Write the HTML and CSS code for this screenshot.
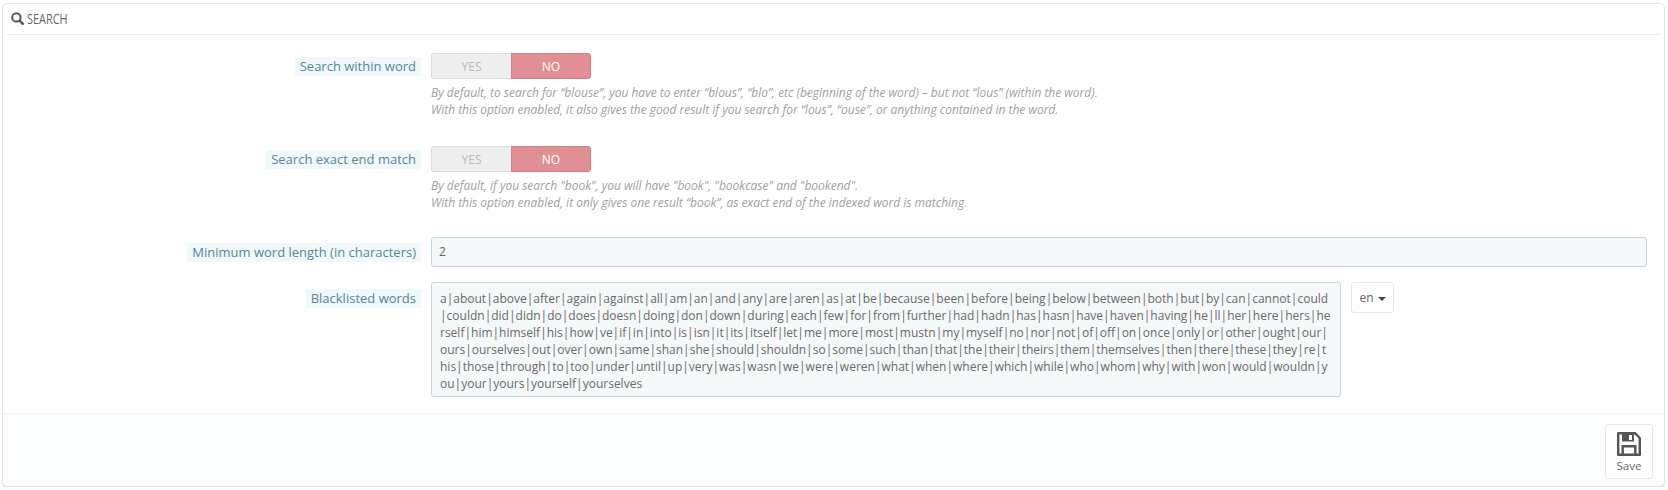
FILE: index.html
```html
<!DOCTYPE html>
<html lang="en">
<head>
<meta charset="utf-8">
<title>Search</title>
<link rel="stylesheet" href="styles.css">
</head>
<body>
<form class="panel">
  <div class="panel-heading">
    <svg class="search-icon" viewBox="0 0 13 13" width="13" height="13" aria-hidden="true"><circle cx="5.4" cy="5.4" r="4.2" fill="none" stroke="#555" stroke-width="2"/><path d="M8.6 8.6l3.2 3.2" stroke="#555" stroke-width="2.4" stroke-linecap="round"/></svg>
    <span class="heading-text">SEARCH</span>
  </div>
  <div class="form-wrapper">
    <div class="form-group first">
      <div class="label-col"><span class="label-text">Search within word</span></div>
      <div class="control-col">
        <div class="switch"><span class="opt">YES</span><span class="opt on">NO</span></div>
        <p class="help">By default, to search for “blouse”, you have to enter “blous”, “blo”, etc (beginning of the word) – but not “lous” (within the word).<br>With this option enabled, it also gives the good result if you search for “lous”, “ouse”, or anything contained in the word.</p>
      </div>
    </div>
    <div class="form-group second">
      <div class="label-col"><span class="label-text">Search exact end match</span></div>
      <div class="control-col">
        <div class="switch"><span class="opt">YES</span><span class="opt on">NO</span></div>
        <p class="help">By default, if you search "book", you will have "book", "bookcase" and "bookend".<br>With this option enabled, it only gives one result “book”, as exact end of the indexed word is matching.</p>
      </div>
    </div>
    <div class="form-group third">
      <div class="label-col center"><span class="label-text">Minimum word length (in characters)</span></div>
      <div class="control-col"><input class="text-input" type="text" value="2"></div>
    </div>
    <div class="form-group">
      <div class="label-col top"><span class="label-text">Blacklisted words</span></div>
      <div class="control-col row">
        <textarea class="words" rows="6">a|about|above|after|again|against|all|am|an|and|any|are|aren|as|at|be|because|been|before|being|below|between|both|but|by|can|cannot|could|couldn|did|didn|do|does|doesn|doing|don|down|during|each|few|for|from|further|had|hadn|has|hasn|have|haven|having|he|ll|her|here|hers|herself|him|himself|his|how|ve|if|in|into|is|isn|it|its|itself|let|me|more|most|mustn|my|myself|no|nor|not|of|off|on|once|only|or|other|ought|our|ours|ourselves|out|over|own|same|shan|she|should|shouldn|so|some|such|than|that|the|their|theirs|them|themselves|then|there|these|they|re|this|those|through|to|too|under|until|up|very|was|wasn|we|were|weren|what|when|where|which|while|who|whom|why|with|won|would|wouldn|you|your|yours|yourself|yourselves</textarea>
        <button class="lang" type="button">en<span class="caret"></span></button>
      </div>
    </div>
  </div>
  <div class="panel-footer">
    <button class="save" type="button">
      <svg viewBox="0 0 24 24" width="24" height="24" aria-hidden="true"><path d="M1.2 1.2H18L22.8 6V22.8H1.2Z" fill="none" stroke="#555" stroke-width="2.4" stroke-linejoin="round"/><path fill="#555" fill-rule="evenodd" d="M5 1H17V9.5H5ZM12 3V8H15V3Z"/><path d="M5.7 23V14.2H18.3V23" fill="none" stroke="#555" stroke-width="2.4"/></svg>
      <span>Save</span>
    </button>
  </div>
</form>
</body>
</html>
```
FILE: styles.css
```css
* { box-sizing: border-box; }
html, body { margin: 0; background: #fff; }
body {
  padding: 3px 3px 0 2px;
  font-family: "Open Sans", "Liberation Sans", sans-serif;
  font-size: 12px;
  color: #666;
}
.panel {
  height: 484px;
  border: 1px solid #e6e6e6;
  border-radius: 5px;
  box-shadow: 0 2px 0 rgba(0, 0, 0, .1);
  display: flex;
  flex-direction: column;
  background: #fff;
}
.panel-heading {
  margin: 0 3px;
  height: 31px;
  padding: 0 0 2px 5px;
  border-bottom: 1px solid #eeeeee;
  display: flex;
  align-items: center;
  gap: 3px;
  font-size: 14px;
  color: #666;
}
.search-icon { flex: none; }
.heading-text {
  display: inline-block;
  transform: scaleX(.78);
  transform-origin: left center;
}
.form-wrapper { flex: 1; padding-top: 18px; }
.form-group { display: flex; align-items: flex-start; }
.form-group.first { margin-bottom: 28px; }
.form-group.second { margin-bottom: 26px; }
.form-group.third { margin-bottom: 15px; }
.label-col {
  width: 428px;
  flex: none;
  padding-right: 10px;
  text-align: right;
  padding-top: 4px;
}
.label-col.center { padding-top: 6px; }
.label-col.top { padding-top: 7px; }
.label-text {
  display: inline-block;
  background: #eff8fb;
  color: #5a8599;
  font-size: 13px;
  line-height: 19px;
  padding: 0 5px;
  border-radius: 2px;
}
.control-col { flex: 1; padding-right: 17px; }
.control-col.row { display: flex; align-items: flex-start; gap: 10px; }
.switch { display: flex; width: 160px; height: 26px; }
.opt {
  width: 80px;
  display: flex;
  align-items: center;
  justify-content: center;
  background: #eeeeee;
  color: #bbbbbb;
  border: 1px solid #dcdcdc;
  border-right: 0;
  border-radius: 3px 0 0 3px;
}
.opt.on {
  background: #e08f95;
  color: #fff;
  border: 1px solid #cf8087;
  border-radius: 0 3px 3px 0;
}
.help {
  margin: 5px 0 0;
  font-style: italic;
  line-height: 17px;
  letter-spacing: -.016px;
  color: #a0a0a0;
}
.text-input {
  display: block;
  width: 100%;
  height: 30px;
  padding: 0 7px 2px;
  background: #f5f8f9;
  border: 1px solid #c7d6db;
  border-radius: 3px;
  font: 12px "Open Sans", sans-serif;
  color: #666;
  outline: 0;
}
.words {
  display: block;
  width: 910px;
  height: 115px;
  padding: 7px 8px 5px;
  background: #f5f8f9;
  border: 1px solid #c7d6db;
  border-radius: 3px;
  font: 12px/17px "Open Sans", sans-serif;
  color: #6a6a6a;
  resize: none;
  overflow: hidden;
  word-break: break-all;
  outline: 0;
}
.lang {
  width: 43px;
  height: 31px;
  padding: 0;
  background: #fff;
  border: 1px solid #e6e6e6;
  border-radius: 3px;
  font: 12px "Open Sans", sans-serif;
  color: #666;
}
.caret {
  display: inline-block;
  margin-left: 4px;
  vertical-align: middle;
  border-top: 4px solid #444;
  border-left: 4px solid transparent;
  border-right: 4px solid transparent;
}
.panel-footer {
  height: 73px;
  flex: none;
  background: #fcfdfe;
  border-top: 1px solid #eff1f2;
  border-radius: 0 0 5px 5px;
  padding: 10px 11px 0 0;
  display: flex;
  justify-content: flex-end;
  align-items: flex-start;
}
.save {
  width: 48px;
  height: 55px;
  padding: 7px 0 0;
  background: #fff;
  border: 1px solid #e6e6e6;
  border-radius: 3px;
  display: flex;
  flex-direction: column;
  align-items: center;
  gap: 2px;
  font: 11.5px "Open Sans", sans-serif;
  color: #666;
}
```
